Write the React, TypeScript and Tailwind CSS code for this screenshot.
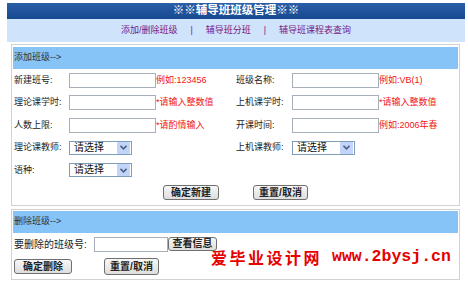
import React from "react";

const FONT = "font-['Liberation_Sans','Noto_Sans_CJK_SC',sans-serif]";

function TextBox({ w = "w-[87px]" }: { w?: string }) {
  return <div className={`h-[15px] ${w} border border-[#a7afba] bg-white`} />;
}

function Picker() {
  return (
    <div className="flex h-[14px] w-[63px] items-center border border-[#7f9db9] bg-white">
      <span className="flex-1 pl-[4px] text-[10px] leading-none text-[#111]">请选择</span>
      <span className="mr-px flex h-[12px] w-[13px] items-center justify-center rounded-[1px] bg-[#c3d4fb]">
        <svg width="7" height="5" viewBox="0 0 7 5">
          <path d="M0.5 0.8 L3.5 3.8 L6.5 0.8" fill="none" stroke="#4d6185" strokeWidth="1.6" />
        </svg>
      </span>
    </div>
  );
}

function Btn({ label, w, h = "h-[15px]" }: { label: string; w: string; h?: string }) {
  return (
    <div
      className={`flex ${w} ${h} items-center justify-center rounded-[3px] border border-[#6f6f6f] bg-gradient-to-b from-[#f7f7f7] to-[#dedede] text-[10px] leading-none text-[#222] font-semibold`}
    >
      {label}
    </div>
  );
}

function Hint({ text }: { text: string }) {
  return <span className="text-[9px] leading-none text-[#f01414]">{text}</span>;
}

function Label({ text, pad = false }: { text: string; pad?: boolean }) {
  return (
    <div className={`flex items-center text-[9px] text-[#222] ${pad ? "pl-px" : ""}`}>{text}</div>
  );
}

function Field({ hint }: { hint?: string }) {
  return (
    <div className="flex items-center">
      <TextBox />
      {hint && <Hint text={hint} />}
    </div>
  );
}

export default function App() {
  return (
    <div className={`relative h-[286px] w-[468px] overflow-hidden bg-white ${FONT}`}>
      <div className="ml-[7px] mt-[3px] w-[458px]">
        <div className="flex h-[16px] items-center justify-center bg-gradient-to-b from-[#2a5ea8] to-[#17498f] text-[11.5px] font-bold text-white">
          ※※辅导班班级管理※※
        </div>
        <nav className="flex h-[23px] items-center justify-center gap-[13px] bg-[#cfe3fb] text-[9px] text-[#7b1a86]">
          <span>添加/删除班级</span>
          <span>|</span>
          <span>辅导班分班</span>
          <span>|</span>
          <span>辅导班课程表查询</span>
        </nav>
      </div>

      {/* add class panel */}
      <section className="ml-[11px] mt-[2px] w-[449px] border border-[#d2d2d2] px-px pb-px pt-[2px]">
        <div className="flex h-[22px] items-center bg-[#86c3f7] pl-px text-[9px] text-[#333]">添加班级--&gt;</div>
        <div className="grid grid-cols-[56px_167px_56px_1fr] auto-rows-[22.5px]">
          <Label text="新建班号:" pad />
          <Field hint="例如:123456" />
          <Label text="班级名称:" />
          <Field hint="例如:VB(1)" />

          <Label text="理论课学时:" pad />
          <Field hint="*请输入整数值" />
          <Label text="上机课学时:" />
          <Field hint="*请输入整数值" />

          <Label text="人数上限:" pad />
          <Field hint="*请酌情输入" />
          <Label text="开课时间:" />
          <Field hint="例如:2006年春" />

          <Label text="理论课教师:" pad />
          <div className="flex items-center">
            <Picker />
          </div>
          <Label text="上机课教师:" />
          <div className="flex items-center">
            <Picker />
          </div>

          <Label text="语种:" pad />
          <div className="col-span-3 flex items-center">
            <Picker />
          </div>

          <div className="col-span-4 flex items-center justify-center gap-[34px]">
            <Btn label="确定新建" w="w-[56px]" />
            <Btn label="重置/取消" w="w-[55px]" />
          </div>
        </div>
      </section>

      {/* delete class panel */}
      <section className="ml-[11px] mt-[3px] w-[449px] border border-[#d2d2d2] px-px pb-[2px] pt-px">
        <div className="flex h-[22px] items-center bg-[#86c3f7] pl-px text-[9px] text-[#333]">删除班级--&gt;</div>
        <div className="flex h-[23px] items-center pl-px">
          <span className="w-[80px] text-[10px] text-[#222]">要删除的班级号:</span>
          <TextBox w="w-[74px]" />
          <div className="mb-[2px]">
            <Btn label="查看信息" w="w-[49px]" h="h-[14px]" />
          </div>
        </div>
        <div className="flex h-[21px] items-center gap-[32px] pl-px">
          <Btn label="确定删除" w="w-[58px]" />
          <Btn label="重置/取消" w="w-[55px]" h="h-[17px]" />
        </div>
      </section>

      <div className="absolute left-[211px] top-[249px] flex items-center whitespace-nowrap font-bold leading-[16px] text-[#e60000]">
        <span className="font-['Noto_Sans_CJK_SC',sans-serif] text-[16px] tracking-[2.5px]">爱毕业设计网</span>
        <span className="ml-[10px] font-['Liberation_Mono',monospace] text-[16.5px]">www.2bysj.cn</span>
      </div>
    </div>
  );
}
